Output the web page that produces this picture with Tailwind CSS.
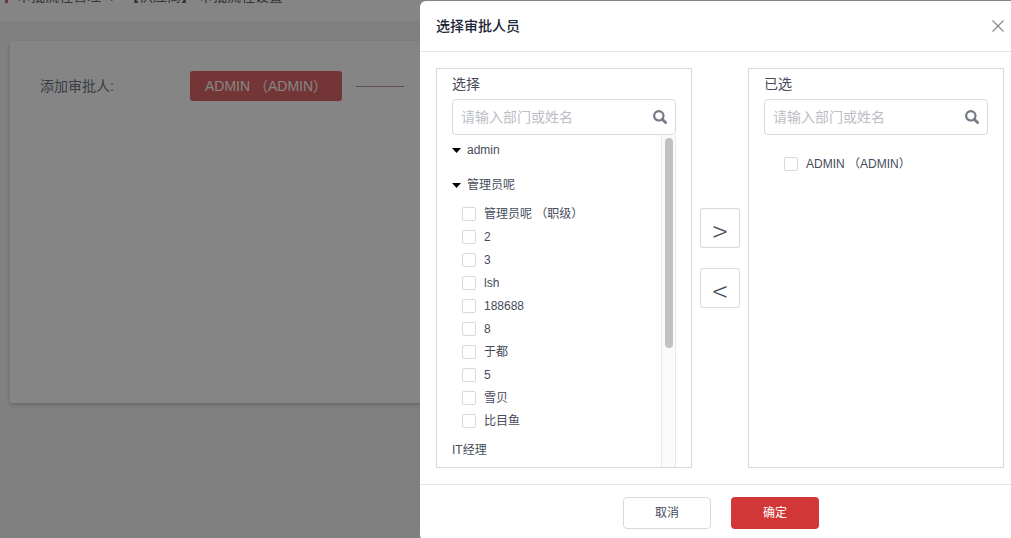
<!DOCTYPE html>
<html lang="zh-CN">
<head>
<meta charset="utf-8">
<meta name="viewport" content="width=device-width, initial-scale=1">
<title>审批流程设置</title>
<script src="https://cdn.jsdelivr.net/npm/@tailwindcss/browser@4"></script>
</head>
<body class="h-screen overflow-hidden bg-[#f3f3f3] font-['Liberation_Sans','Noto_Sans_CJK_SC',sans-serif] text-xs text-[#464c5b]">

<!-- Page behind the dialog -->
<header class="-mt-[29px] flex h-[50px] items-center bg-white pl-[5px] text-sm">
  <span class="mr-[9px] h-[14px] w-[3px] bg-[#d23737]"></span>
  <nav class="flex whitespace-pre text-[#333]"><a href="#" class="mr-[10px]">审批流程管理</a><span class="mr-[10px]">/</span><span class="mr-[4px]">【供应商】</span><span>审批流程设置</span></nav>
</header>
<main class="mx-[10px] mt-5 min-h-[362px] rounded-xs bg-white px-[30px] pt-[30px] shadow-[0_2px_4px_rgba(0,0,0,0.25)]">
  <div class="flex items-center text-sm">
    <span class="w-[150px]">添加审批人:</span>
    <button type="button" class="h-[30px] w-[152px] rounded-[3px] bg-[#d23737] pl-[15px] text-left whitespace-nowrap text-white">ADMIN （ADMIN）</button>
    <span class="ml-[14px] h-px w-12 bg-[#a87a76]"></span>
  </div>
</main>

<!-- Mask and dialog -->
<div class="fixed inset-0 overflow-hidden bg-[#333]/60">
  <section role="dialog" aria-labelledby="dlg-title" class="mt-px ml-[420px] w-[602px] rounded-md bg-white">
    <div class="flex h-[51px] items-center justify-between border-b border-[#e5e5e5] pr-[18px] pl-4">
      <h2 id="dlg-title" class="text-sm font-medium text-[#1c2438]">选择审批人员</h2>
      <button type="button" aria-label="关闭" class="text-[#888]">
        <svg class="size-3" viewBox="0 0 12 12" fill="none" stroke="currentColor" stroke-width="1.1"><path d="M.5 .5l11 11M11.5 .5l-11 11"/></svg>
      </button>
    </div>

    <div class="flex p-4">
      <div class="flex h-[400px] w-64 flex-col border border-[#d7d9dd] px-[15px]">
        <label for="s1" class="text-sm leading-[30px]">选择</label>
        <div class="flex h-9 shrink-0 items-center rounded-[4px] border border-[#d7d9dd] pr-2 pl-2">
          <input id="s1" type="text" placeholder="请输入部门或姓名" class="min-w-0 flex-1 text-sm outline-none placeholder:text-[#bbbec4]">
          <svg class="size-[14px] text-[#747a88]" viewBox="0 0 14 14" fill="none" stroke="currentColor"><circle cx="5.8" cy="5.8" r="4.7" stroke-width="2.2"/><path d="M9.200 9.200l3.400 3.400" stroke-width="2.8" stroke-linecap="round"/></svg>
        </div>
        <div class="flex min-h-0 flex-1 overflow-hidden">
          <ul class="flex-1">
            <li class="mb-[5px] flex h-[30px] items-center gap-[6px]"><svg class="h-[5px] w-[9px]" viewBox="0 0 9 5" fill="#000"><path d="M0 0h9L4.500 5z"/></svg>admin</li>
            <li>
              <div class="flex h-[30px] items-center gap-[6px]"><svg class="h-[5px] w-[9px]" viewBox="0 0 9 5" fill="#000"><path d="M0 0h9L4.500 5z"/></svg>管理员呢</div>
              <ul class="my-[2px] pl-[10px]">
                <li><label class="flex h-[23px] items-center gap-2"><input type="checkbox" class="size-[14px] appearance-none rounded-[2px] border border-[#d7d9dd] bg-white">管理员呢 （职级）</label></li>
                <li><label class="flex h-[23px] items-center gap-2"><input type="checkbox" class="size-[14px] appearance-none rounded-[2px] border border-[#d7d9dd] bg-white">2</label></li>
                <li><label class="flex h-[23px] items-center gap-2"><input type="checkbox" class="size-[14px] appearance-none rounded-[2px] border border-[#d7d9dd] bg-white">3</label></li>
                <li><label class="flex h-[23px] items-center gap-2"><input type="checkbox" class="size-[14px] appearance-none rounded-[2px] border border-[#d7d9dd] bg-white">lsh</label></li>
                <li><label class="flex h-[23px] items-center gap-2"><input type="checkbox" class="size-[14px] appearance-none rounded-[2px] border border-[#d7d9dd] bg-white">188688</label></li>
                <li><label class="flex h-[23px] items-center gap-2"><input type="checkbox" class="size-[14px] appearance-none rounded-[2px] border border-[#d7d9dd] bg-white">8</label></li>
                <li><label class="flex h-[23px] items-center gap-2"><input type="checkbox" class="size-[14px] appearance-none rounded-[2px] border border-[#d7d9dd] bg-white">于都</label></li>
                <li><label class="flex h-[23px] items-center gap-2"><input type="checkbox" class="size-[14px] appearance-none rounded-[2px] border border-[#d7d9dd] bg-white">5</label></li>
                <li><label class="flex h-[23px] items-center gap-2"><input type="checkbox" class="size-[14px] appearance-none rounded-[2px] border border-[#d7d9dd] bg-white">雪贝</label></li>
                <li><label class="flex h-[23px] items-center gap-2"><input type="checkbox" class="size-[14px] appearance-none rounded-[2px] border border-[#d7d9dd] bg-white">比目鱼</label></li>
              </ul>
            </li>
            <li class="flex h-8 items-center">IT经理</li>
          </ul>
          <div class="w-[15px] border-x border-[#e8e8e8] bg-[#fafafa] px-[3px] pt-[3px]"><div class="h-[210px] w-2 rounded-full bg-[#c1c1c1]"></div></div>
        </div>
      </div>

      <div class="mx-2 mt-[140px] flex flex-col gap-5 font-['Noto_Sans_CJK_SC',sans-serif]">
        <button type="button" aria-label="添加" class="flex size-10 items-center justify-center rounded-[3px] border border-[#d7d9dd] pt-1 text-[28px] leading-none font-light">&gt;</button>
        <button type="button" aria-label="移除" class="flex size-10 items-center justify-center rounded-[3px] border border-[#d7d9dd] pt-1 text-[28px] leading-none font-light">&lt;</button>
      </div>

      <div class="flex h-[400px] w-64 flex-col border border-[#d7d9dd] px-[15px]">
        <label for="s2" class="text-sm leading-[30px]">已选</label>
        <div class="flex h-9 shrink-0 items-center rounded-[4px] border border-[#d7d9dd] pr-2 pl-2">
          <input id="s2" type="text" placeholder="请输入部门或姓名" class="min-w-0 flex-1 text-sm outline-none placeholder:text-[#bbbec4]">
          <svg class="size-[14px] text-[#747a88]" viewBox="0 0 14 14" fill="none" stroke="currentColor"><circle cx="5.8" cy="5.8" r="4.7" stroke-width="2.2"/><path d="M9.200 9.200l3.400 3.400" stroke-width="2.8" stroke-linecap="round"/></svg>
        </div>
        <label class="mt-[17px] ml-5 flex h-[23px] items-center gap-2"><input type="checkbox" class="size-[14px] appearance-none rounded-[2px] border border-[#d7d9dd] bg-white">ADMIN （ADMIN）</label>
      </div>
    </div>

    <div class="flex justify-center gap-5 border-t border-[#e5e5e5] py-3">
      <button type="button" class="h-8 w-[88px] rounded-[4px] border border-[#d7d9dd]">取消</button>
      <button type="button" class="h-8 w-[88px] rounded-[4px] bg-[#d23737] text-white">确定</button>
    </div>
  </section>
</div>
</body>
</html>
